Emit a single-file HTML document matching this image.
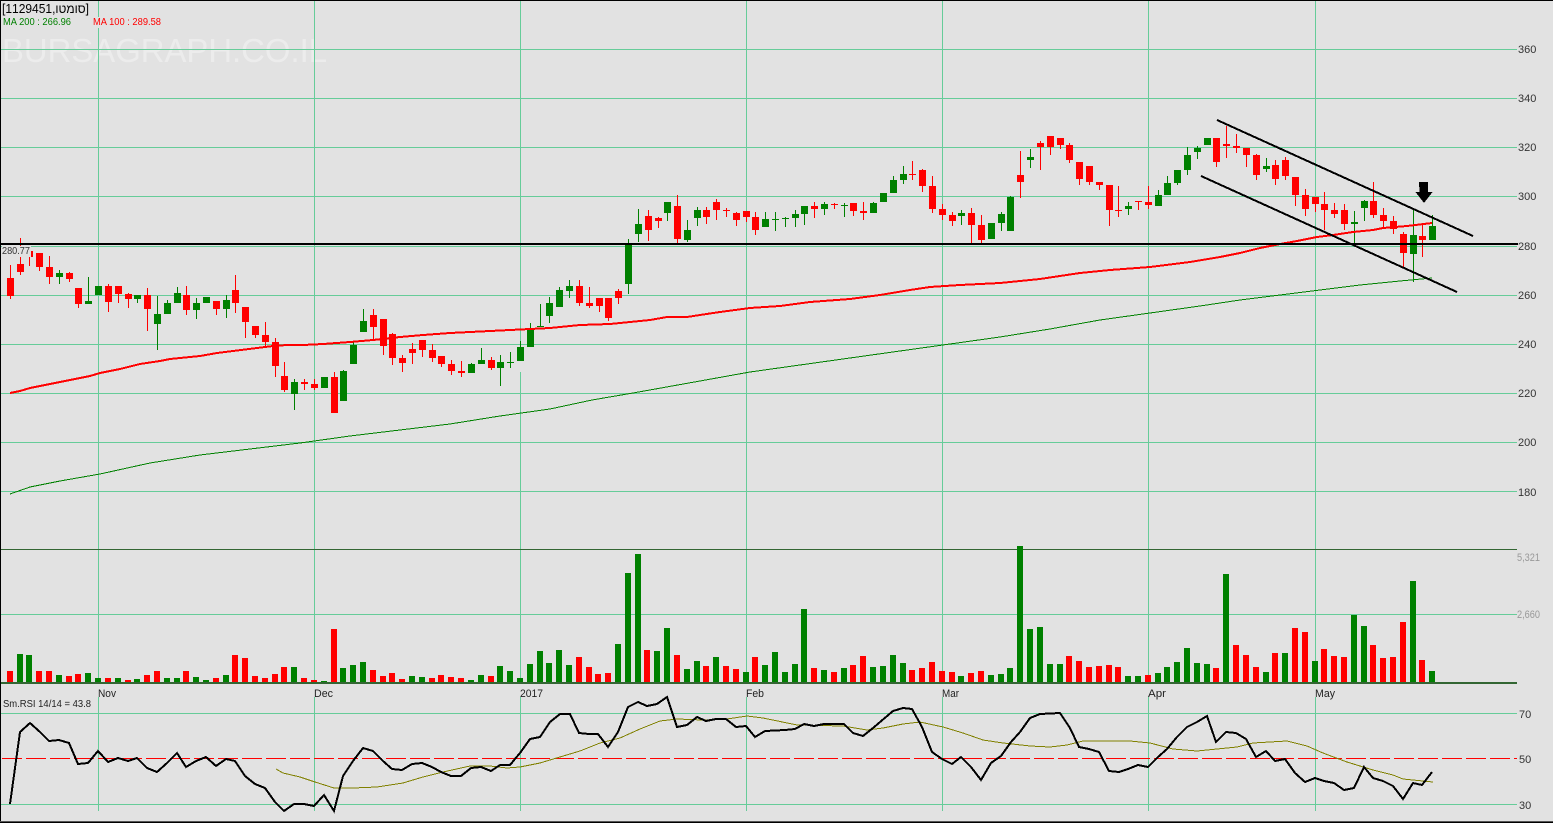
<!DOCTYPE html>
<html lang="en">
<head>
<meta charset="utf-8">
<title>Chart</title>
<style>
html,body{margin:0;padding:0;width:1553px;height:823px;overflow:hidden;background:#e2e2e2}
svg{display:block;font-family:"Liberation Sans",Arial,sans-serif}
</style>
</head>
<body>
<svg width="1553" height="823" viewBox="0 0 1553 823" xmlns="http://www.w3.org/2000/svg">
<rect width="1553" height="823" fill="#e2e2e2"/>
<text x="2" y="62" font-size="33" fill="#ececec" textLength="325" lengthAdjust="spacingAndGlyphs">BURSAGRAPH.CO.IL</text>

<!-- grid -->
<g fill="#66cc99" shape-rendering="crispEdges">
<rect x="1" y="49" width="1516" height="1"/><rect x="1" y="98" width="1516" height="1"/><rect x="1" y="147" width="1516" height="1"/><rect x="1" y="196" width="1516" height="1"/><rect x="1" y="246" width="1516" height="1"/><rect x="1" y="295" width="1516" height="1"/><rect x="1" y="344" width="1516" height="1"/><rect x="1" y="393" width="1516" height="1"/><rect x="1" y="442" width="1516" height="1"/><rect x="1" y="491" width="1516" height="1"/>
<rect x="1" y="614" width="1516" height="1"/>
<rect x="1" y="713" width="1516" height="1"/><rect x="1" y="804" width="1516" height="1"/>
<rect x="98" y="1" width="1" height="682"/><rect x="314" y="1" width="1" height="682"/><rect x="520" y="1" width="1" height="346"/><rect x="520" y="372" width="1" height="311"/><rect x="746" y="1" width="1" height="682"/><rect x="942" y="1" width="1" height="682"/><rect x="1148" y="1" width="1" height="682"/><rect x="1315" y="1" width="1" height="682"/>
<rect x="98" y="697" width="1" height="114"/><rect x="314" y="697" width="1" height="114"/><rect x="520" y="697" width="1" height="114"/><rect x="746" y="697" width="1" height="114"/><rect x="942" y="697" width="1" height="114"/><rect x="1148" y="697" width="1" height="114"/><rect x="1315" y="697" width="1" height="114"/>
</g>
<rect x="1" y="549" width="1516" height="1" fill="#336633" shape-rendering="crispEdges"/>
<path d="M2 758.5H1517" stroke="#ff0000" stroke-width="1" stroke-dasharray="20 4" fill="none" shape-rendering="crispEdges"/>

<!-- candles: red -->
<g shape-rendering="crispEdges">
<path fill="none" stroke="#ff0000" stroke-width="1" d="M10.5 265V299M20.5 238V275M29.5 251V266M39.5 253V271M49.5 256V284M69.5 272V282M78.5 288V308M108.5 284V312M118.5 286V303M128.5 293V308M147.5 288V331M186.5 286V315M216.5 301V315M235.5 275V313M245.5 307V338M255.5 326V338M265.5 322V347M275.5 338V377M284.5 362V392M304.5 379V390M314.5 379V390M334.5 372V413M373.5 309V340M383.5 319V355M392.5 333V365M402.5 355V372M412.5 343V364M422.5 340V357M432.5 344V362M441.5 356V367M451.5 360V375M461.5 361V377M491.5 357V370M579.5 280V306M589.5 287V308M599.5 298V312M608.5 298V321M618.5 289V304M648.5 210V241M658.5 217V228M677.5 195V243M706.5 207V224M716.5 199V220M726.5 208V217M736.5 212V226M746.5 211V222M755.5 212V235M814.5 202V218M834.5 203V209M853.5 203V216M863.5 202V220M912.5 161V180M922.5 169V192M932.5 176V213M942.5 204V220M952.5 212V226M971.5 208V243M981.5 215V243M1020.5 151V198M1040.5 141V170M1050.5 136V155M1060.5 138V149M1069.5 143V163M1079.5 162V185M1089.5 166V185M1099.5 182V190M1109.5 185V226M1118.5 186V217M1138.5 201V210M1148.5 186V209M1216.5 138V167M1226.5 126V158M1236.5 134V153M1246.5 148V167M1256.5 154V180M1275.5 160V185M1285.5 157V180M1295.5 177V206M1305.5 189V216M1315.5 197V212M1324.5 192V230M1334.5 203V218M1344.5 204V230M1373.5 182V218M1383.5 208V228M1393.5 216V234M1403.5 232V268M1422.5 224V257"/>
<path fill="#ff0000" d="M7 278h7v18h-7zM17 264h7v8h-7zM26 251h7v6h-7zM36 253h7v14h-7zM46 267h7v10h-7zM66 273h7v6h-7zM75 288h7v16h-7zM105 286h7v16h-7zM115 286h7v8h-7zM125 294h7v5h-7zM144 295h7v14h-7zM183 295h7v15h-7zM213 301h7v8h-7zM232 290h7v13h-7zM242 307h7v15h-7zM252 326h7v9h-7zM262 335h7v7h-7zM272 342h7v24h-7zM281 376h7v14h-7zM301 382h7v2h-7zM311 384h7v4h-7zM331 377h7v36h-7zM370 315h7v12h-7zM380 319h7v27h-7zM389 334h7v24h-7zM399 358h7v5h-7zM409 349h7v4h-7zM419 340h7v10h-7zM429 350h7v8h-7zM438 356h7v8h-7zM448 364h7v7h-7zM458 371h7v2h-7zM488 360h7v8h-7zM576 286h7v17h-7zM586 303h7v3h-7zM596 298h7v8h-7zM605 298h7v20h-7zM615 291h7v7h-7zM645 216h7v14h-7zM655 218h7v3h-7zM674 206h7v33h-7zM703 210h7v7h-7zM713 202h7v8h-7zM723 210h7v1h-7zM733 213h7v7h-7zM743 211h7v6h-7zM752 217h7v13h-7zM811 206h7v3h-7zM831 204h7v1h-7zM850 203h7v8h-7zM860 211h7v2h-7zM909 174h7v1h-7zM919 170h7v16h-7zM929 186h7v23h-7zM939 209h7v6h-7zM949 215h7v6h-7zM968 213h7v12h-7zM978 225h7v15h-7zM1017 175h7v7h-7zM1037 143h7v4h-7zM1047 136h7v11h-7zM1057 138h7v7h-7zM1066 145h7v15h-7zM1076 162h7v17h-7zM1086 166h7v16h-7zM1096 182h7v3h-7zM1106 185h7v25h-7zM1115 210h7v1h-7zM1135 201h7v1h-7zM1145 202h7v3h-7zM1213 138h7v24h-7zM1223 144h7v2h-7zM1233 146h7v2h-7zM1243 148h7v7h-7zM1253 155h7v20h-7zM1272 165h7v14h-7zM1282 160h7v16h-7zM1292 177h7v18h-7zM1302 195h7v14h-7zM1312 197h7v7h-7zM1321 204h7v6h-7zM1331 210h7v4h-7zM1341 210h7v14h-7zM1370 201h7v14h-7zM1380 215h7v6h-7zM1390 221h7v8h-7zM1400 234h7v19h-7zM1419 236h7v4h-7z"/>
<!-- candles: green -->
<path fill="none" stroke="#008000" stroke-width="1" d="M59.5 270V284M88.5 277V304M98.5 286V295M137.5 295V303M157.5 296V350M167.5 300V314M177.5 287V303M196.5 298V319M206.5 297V303M226.5 295V318M294.5 379V410M324.5 377V388M343.5 370V401M353.5 342V364M363.5 309V332M471.5 363V373M481.5 348V364M500.5 355V386M510.5 352V368M520.5 341V361M530.5 323V347M540.5 304V327M549.5 297V323M559.5 287V307M569.5 280V298M628.5 239V294M638.5 209V242M667.5 202V221M687.5 220V242M697.5 207V226M765.5 212V227M775.5 212V231M785.5 217V227M795.5 210V227M804.5 206V225M824.5 202V215M844.5 203V217M873.5 202V213M883.5 193V202M893.5 176V193M903.5 166V184M961.5 210V225M991.5 223V239M1001.5 212V231M1010.5 196V231M1030.5 149V168M1128.5 202V215M1158.5 190V206M1167.5 176V195M1177.5 170V185M1187.5 147V175M1197.5 146V159M1207.5 138V145M1266.5 158V172M1354.5 211V244M1364.5 200V221M1413.5 210V282M1432.5 215V240"/>
<path fill="#008000" d="M56 273h7v4h-7zM85 301h7v3h-7zM95 286h7v9h-7zM134 295h7v4h-7zM154 314h7v10h-7zM164 303h7v11h-7zM174 293h7v10h-7zM193 303h7v7h-7zM203 297h7v6h-7zM223 300h7v9h-7zM291 382h7v12h-7zM321 377h7v11h-7zM340 371h7v30h-7zM350 345h7v19h-7zM360 321h7v11h-7zM468 364h7v9h-7zM478 360h7v4h-7zM497 362h7v6h-7zM507 362h7v1h-7zM517 347h7v14h-7zM527 330h7v17h-7zM537 326h7v1h-7zM546 303h7v13h-7zM556 290h7v17h-7zM566 286h7v5h-7zM625 244h7v40h-7zM635 224h7v10h-7zM664 202h7v11h-7zM684 230h7v10h-7zM694 210h7v8h-7zM762 219h7v8h-7zM772 219h7v1h-7zM782 218h7v1h-7zM792 214h7v4h-7zM801 206h7v8h-7zM821 204h7v5h-7zM841 205h7v1h-7zM870 203h7v10h-7zM880 193h7v9h-7zM890 180h7v13h-7zM900 174h7v6h-7zM958 213h7v3h-7zM988 223h7v16h-7zM998 214h7v9h-7zM1007 197h7v34h-7zM1027 157h7v3h-7zM1125 206h7v3h-7zM1155 195h7v11h-7zM1164 183h7v12h-7zM1174 170h7v13h-7zM1184 155h7v15h-7zM1194 148h7v4h-7zM1204 138h7v7h-7zM1263 166h7v3h-7zM1351 222h7v2h-7zM1361 201h7v7h-7zM1410 235h7v19h-7zM1429 226h7v14h-7z"/>
</g>

<!-- moving averages -->
<polyline shape-rendering="crispEdges" fill="none" stroke="#008000" stroke-width="1" points="10,494 30,487 60,481 100,474 150,463 200,455 250,449 300,443 350,436 400,430 450,424 500,416 550,409 592,400 633,393 700,381 750,372 800,365 850,358 900,351 950,344 1000,337 1050,329 1100,320 1150,313 1200,306 1240,300 1280,295 1320,290 1360,285 1400,281 1432,278"/>
<polyline shape-rendering="crispEdges" fill="none" stroke="#ff0000" stroke-width="2" points="10,393 20,391 30,388 50,384 70,380 90,376 100,373 120,369 140,364 160,361 170,359 200,356 217,353 233,351 257,348 273,346 287,345 303,345 323,344 350,342 373,340 400,337 423,335 450,333 490,331 530,329 550,328 580,325 610,324 630,322 650,320 667,317 687,317 700,315 720,312 750,308 780,306 810,302 850,299 880,295 910,290 930,287 960,285 1000,283 1040,279 1080,273 1110,270 1150,267 1190,262 1220,257 1240,253 1260,248 1280,244 1297,241 1317,237 1333,235 1353,232 1373,230 1383,228 1407,226 1432,223"/>

<!-- support & channel -->
<rect x="1" y="243" width="1517" height="2" fill="#000" shape-rendering="crispEdges"/>
<g stroke="#000" stroke-width="2" fill="none" shape-rendering="crispEdges">
<path d="M1217 120L1473 236"/>
<path d="M1201 176L1457 292"/>
</g>
<path d="M1419 182h9v10h4.500l-8.500 11-8.500-11h4z" fill="#000" shape-rendering="crispEdges"/>

<!-- volume -->
<g shape-rendering="crispEdges">
<path fill="#ff0000" d="M7 671h6V682H7zM36 671h6V682h-6zM46 671h6V682h-6zM66 676h6V682h-6zM75 674h6V682h-6zM105 678h6V682h-6zM125 680h6V682h-6zM144 675h6V682h-6zM154 671h6V682h-6zM183 671h6V682h-6zM213 678h6V682h-6zM232 655h6V682h-6zM242 658h6V682h-6zM252 676h6V682h-6zM262 678h6V682h-6zM272 674h6V682h-6zM281 667h6V682h-6zM301 678h6V682h-6zM311 680h6V682h-6zM331 629h6V682h-6zM370 670h6V682h-6zM380 676h6V682h-6zM389 673h6V682h-6zM399 679h6V682h-6zM429 678h6V682h-6zM438 675h6V682h-6zM448 677h6V682h-6zM458 678h6V682h-6zM488 676h6V682h-6zM576 657h6V682h-6zM586 667h6V682h-6zM595 674h6V682h-6zM605 673h6V682h-6zM644 650h6V682h-6zM674 655h6V682h-6zM703 666h6V682h-6zM723 666h6V682h-6zM733 669h6V682h-6zM752 657h6V682h-6zM811 668h6V682h-6zM831 672h6V682h-6zM850 665h6V682h-6zM860 656h6V682h-6zM909 670h6V682h-6zM919 668h6V682h-6zM929 662h6V682h-6zM939 671h6V682h-6zM949 672h6V682h-6zM968 673h6V682h-6zM978 671h6V682h-6zM1066 656h6V682h-6zM1076 661h6V682h-6zM1086 667h6V682h-6zM1096 666h6V682h-6zM1106 665h6V682h-6zM1115 667h6V682h-6zM1145 675h6V682h-6zM1213 668h6V682h-6zM1233 645h6V682h-6zM1243 655h6V682h-6zM1253 667h6V682h-6zM1272 653h6V682h-6zM1292 628h6V682h-6zM1302 632h6V682h-6zM1321 649h6V682h-6zM1331 656h6V682h-6zM1341 657h6V682h-6zM1370 645h6V682h-6zM1380 658h6V682h-6zM1390 657h6V682h-6zM1400 622h6V682h-6zM1419 660h6V682h-6z"/>
<path fill="#008000" d="M17 654h6V682h-6zM26 655h6V682h-6zM56 675h6V682h-6zM85 673h6V682h-6zM95 678h6V682h-6zM115 678h6V682h-6zM134 679h6V682h-6zM164 678h6V682h-6zM174 678h6V682h-6zM193 677h6V682h-6zM203 680h6V682h-6zM223 675h6V682h-6zM291 667h6V682h-6zM321 681h6V682h-6zM340 668h6V682h-6zM350 665h6V682h-6zM360 662h6V682h-6zM409 676h6V682h-6zM419 677h6V682h-6zM468 680h6V682h-6zM478 675h6V682h-6zM497 666h6V682h-6zM507 671h6V682h-6zM517 678h6V682h-6zM527 664h6V682h-6zM537 651h6V682h-6zM546 663h6V682h-6zM556 650h6V682h-6zM566 665h6V682h-6zM615 644h6V682h-6zM625 573h6V682h-6zM635 554h6V682h-6zM654 651h6V682h-6zM664 628h6V682h-6zM684 669h6V682h-6zM694 661h6V682h-6zM713 657h6V682h-6zM743 672h6V682h-6zM762 665h6V682h-6zM772 652h6V682h-6zM782 672h6V682h-6zM792 664h6V682h-6zM801 609h6V682h-6zM821 670h6V682h-6zM841 668h6V682h-6zM870 667h6V682h-6zM880 666h6V682h-6zM890 655h6V682h-6zM900 663h6V682h-6zM958 676h6V682h-6zM988 675h6V682h-6zM998 674h6V682h-6zM1007 668h6V682h-6zM1017 546h6V682h-6zM1027 629h6V682h-6zM1037 627h6V682h-6zM1047 664h6V682h-6zM1057 664h6V682h-6zM1125 676h6V682h-6zM1135 676h6V682h-6zM1155 673h6V682h-6zM1164 667h6V682h-6zM1174 662h6V682h-6zM1184 648h6V682h-6zM1194 663h6V682h-6zM1204 664h6V682h-6zM1223 574h6V682h-6zM1263 672h6V682h-6zM1282 653h6V682h-6zM1312 661h6V682h-6zM1351 615h6V682h-6zM1361 626h6V682h-6zM1410 581h6V682h-6zM1429 671h6V682h-6z"/>
<rect x="1" y="682" width="1516" height="2" fill="#336633"/>
</g>

<!-- RSI -->
<polyline shape-rendering="crispEdges" fill="none" stroke="#808000" stroke-width="1" points="276,769 283,773 300,777 315,782 334,788 353,788 377,787 403,783 423,777 443,772 470,766 490,766 507,768 520,767 540,763 560,757 580,751 600,743 620,738 640,729 660,721 677,719 703,720 727,719 747,716 763,718 797,725 843,726 867,730 883,728 903,724 920,722 943,727 963,733 983,740 1003,743 1030,746 1050,747 1067,745 1083,741 1130,741 1150,743 1173,749 1197,751 1237,747 1253,743 1287,741 1307,746 1323,753 1347,762 1373,770 1393,775 1403,779 1433,782"/>
<polyline shape-rendering="crispEdges" fill="none" stroke="#000" stroke-width="2" points="10,804 20,732 30,723 40,732 49,741 59,740 69,743 78,764 88,763 98,751 108,762 118,758 128,761 137,758 147,768 157,772 167,763 177,753 186,767 196,761 206,757 216,766 226,759 235,761 245,776 255,784 265,788 275,802 284,811 294,804 304,804 314,806 324,795 334,811 343,776 353,761 363,748 373,751 383,761 392,769 402,770 412,764 422,763 432,767 441,772 451,776 461,776 471,768 481,767 491,771 500,765 510,765 520,753 530,739 540,737 550,722 560,714 570,714 579,733 589,734 598,734 608,747 618,732 628,707 638,702 647,706 657,704 667,697 677,727 687,725 697,717 706,721 716,719 726,719 736,727 746,726 755,737 765,731 785,730 795,729 804,724 814,726 824,724 844,724 853,733 863,736 873,728 893,711 903,708 912,709 922,727 932,752 942,759 952,764 961,757 971,767 981,780 991,763 1001,756 1011,742 1020,732 1030,718 1040,714 1060,713 1070,728 1079,747 1089,749 1099,752 1109,771 1119,772 1128,769 1138,765 1148,767 1158,757 1167,749 1177,737 1187,727 1197,722 1207,716 1216,742 1226,732 1236,733 1246,739 1256,757 1266,751 1275,761 1285,759 1295,773 1305,782 1315,778 1324,781 1334,783 1344,790 1354,788 1364,767 1373,778 1383,781 1393,786 1403,799 1413,783 1422,785 1432,772"/>

<!-- labels -->
<rect x="2" y="246" width="29" height="11" fill="#e2e2e2"/>
<text x="2" y="254" font-size="10.500" fill="#333" textLength="28" lengthAdjust="spacingAndGlyphs">280.77</text>
<rect x="93" y="17" width="69" height="11" fill="#e2e2e2"/>
<text x="2" y="13" font-size="12.500" fill="#000" textLength="87" lengthAdjust="spacingAndGlyphs">[1129451,סומטו]</text>
<text x="3" y="25" font-size="10" fill="#008000" textLength="68" lengthAdjust="spacingAndGlyphs">MA 200 : 266.96</text>
<text x="93" y="25" font-size="10" fill="#ff0000" textLength="68" lengthAdjust="spacingAndGlyphs">MA 100 : 289.58</text>

<g font-size="11" fill="#333">
<text x="1518" y="53">360</text>
<text x="1518" y="102">340</text>
<text x="1518" y="151">320</text>
<text x="1518" y="200">300</text>
<text x="1518" y="250">280</text>
<text x="1518" y="299">260</text>
<text x="1518" y="348">240</text>
<text x="1518" y="397">220</text>
<text x="1518" y="446">200</text>
<text x="1518" y="496">180</text>
<text x="1519" y="718">70</text>
<text x="1519" y="763">50</text>
<text x="1519" y="809">30</text>
</g>
<g font-size="11" fill="#999">
<text x="1517" y="561" textLength="23" lengthAdjust="spacingAndGlyphs">5,321</text>
<text x="1517" y="618" textLength="23" lengthAdjust="spacingAndGlyphs">2,660</text>
</g>
<g font-size="11" fill="#222">
<text x="98" y="697" textLength="18" lengthAdjust="spacingAndGlyphs">Nov</text>
<text x="314" y="697" textLength="19" lengthAdjust="spacingAndGlyphs">Dec</text>
<text x="520" y="697" textLength="23" lengthAdjust="spacingAndGlyphs">2017</text>
<text x="746" y="697" textLength="18" lengthAdjust="spacingAndGlyphs">Feb</text>
<text x="942" y="697" textLength="17" lengthAdjust="spacingAndGlyphs">Mar</text>
<text x="1148" y="697" textLength="18" lengthAdjust="spacingAndGlyphs">Apr</text>
<text x="1315" y="697" textLength="20" lengthAdjust="spacingAndGlyphs">May</text>
</g>
<text x="3" y="707" font-size="10" fill="#222" textLength="88" lengthAdjust="spacingAndGlyphs">Sm.RSI 14/14 = 43.8</text>

<!-- frame -->
<g shape-rendering="crispEdges">
<rect x="0" y="0" width="1553" height="1" fill="#000"/>
<rect x="0" y="0" width="1" height="823" fill="#000"/>
<rect x="0" y="821" width="1553" height="1" fill="#555"/>
<rect x="0" y="822" width="1553" height="1" fill="#000"/>
</g>
</svg>
</body>
</html>
